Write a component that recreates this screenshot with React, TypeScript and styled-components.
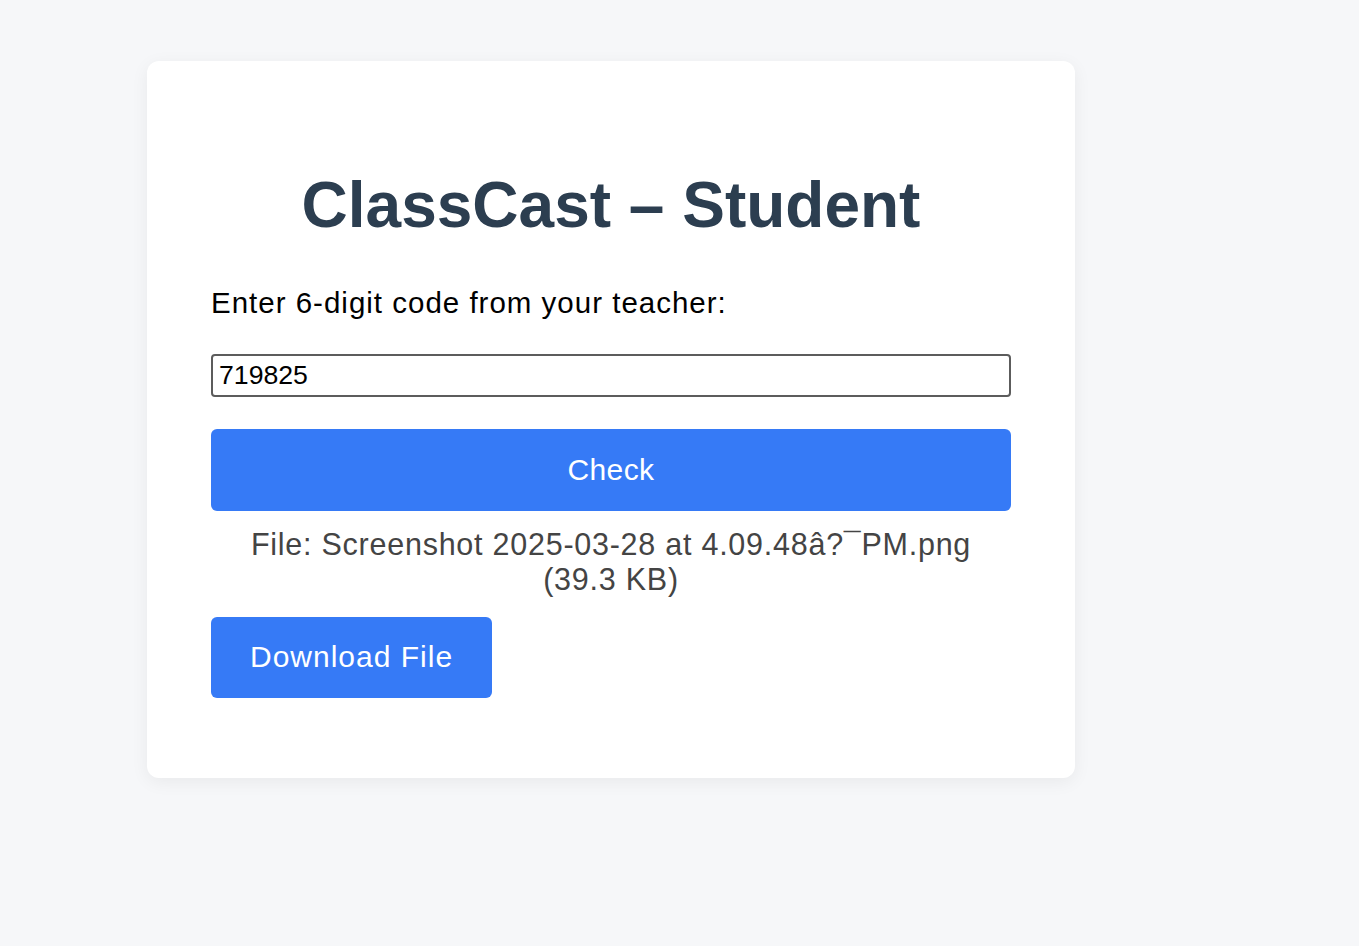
import React from "react";
import styled, { createGlobalStyle } from "styled-components";

const Global = createGlobalStyle`
  html, body { margin: 0; padding: 0; }
  body {
    background: #f6f7f9;
    font-family: "Liberation Sans", Arial, Helvetica, sans-serif;
  }
`;

const Page = styled.div`
  min-height: 946px;
  padding: 61px 0 0 147px;
  box-sizing: border-box;
`;

const Card = styled.div`
  width: 928px;
  box-sizing: border-box;
  padding: 64px 64px 80px;
  background: #ffffff;
  border-radius: 12px;
  box-shadow: 0 4px 18px rgba(0, 0, 0, 0.06);
`;

const Title = styled.h1`
  margin: 43px 0 43px;
  font-size: 64px;
  line-height: 74px;
  font-weight: 700;
  color: #2c3e50;
  text-align: center;
`;

const Label = styled.label`
  display: block;
  font-size: 29.5px;
  line-height: 36px;
  letter-spacing: 1px;
  color: #000;
  margin-bottom: 32.5px;
`;

const CodeInput = styled.input`
  display: block;
  width: 100%;
  height: 43px;
  box-sizing: border-box;
  border: 2px solid #5c5c5c;
  border-radius: 4px;
  padding: 0 6px;
  font-family: "Liberation Sans", Arial, sans-serif;
  font-size: 26.67px;
  color: #000;
  background: #fff;
  outline: none;
`;

const Button = styled.button<{ $full?: boolean }>`
  display: block;
  width: ${(p) => (p.$full ? "100%" : "auto")};
  height: ${(p) => (p.$full ? "82px" : "81px")};
  padding: 0 39px;
  border: none;
  border-radius: 6px;
  background: #367af6;
  color: #fff;
  font-family: "Liberation Sans", Arial, sans-serif;
  font-size: 30px;
  letter-spacing: ${(p) => (p.$full ? "0.4px" : "1px")};
  cursor: pointer;
`;

const CheckButton = styled(Button)`
  margin-top: 32px;
`;

const FileInfo = styled.p`
  margin: 16px 0 20px;
  font-size: 30.5px;
  line-height: 35px;
  letter-spacing: 0.75px;
  color: #444;
  text-align: center;
`;

export default function App() {
  return (
    <>
      <Global />
      <Page>
        <Card>
          <Title>ClassCast – Student</Title>
          <Label htmlFor="code">Enter 6-digit code from your teacher:</Label>
          <CodeInput id="code" defaultValue="719825" />
          <CheckButton $full>Check</CheckButton>
          <FileInfo>File: Screenshot 2025-03-28 at 4.09.48â?¯PM.png (39.3 KB)</FileInfo>
          <Button>Download File</Button>
        </Card>
      </Page>
    </>
  );
}
